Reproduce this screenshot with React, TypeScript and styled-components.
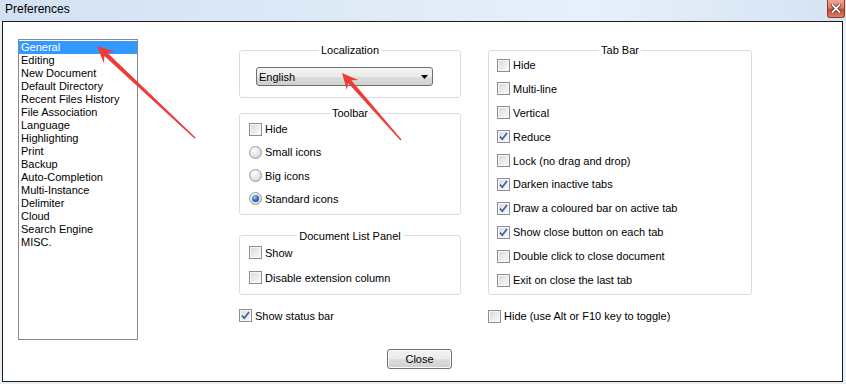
import styled, { createGlobalStyle } from 'styled-components';

const GlobalStyle = createGlobalStyle`
  html, body {
    margin: 0;
    padding: 0;
    background: #ffffff;
  }
  body {
    font-family: "Liberation Sans", Arial, sans-serif;
    font-size: 11px;
    color: #000000;
  }
`;

const Window = styled.div`
  position: relative;
  width: 846px;
  height: 384px;
  display: flex;
  flex-direction: column;
  background: #e6eef8;
  overflow: hidden;
`;

const TitleBar = styled.div`
  height: 21px;
  flex: none;
  display: flex;
  justify-content: space-between;
  align-items: flex-start;
  padding: 0 1px 0 5px;
  background: linear-gradient(to right, #d2e1f1 0%, #dde9f6 35%, #e7f0fa 70%, #d5e3f2 100%);
`;

const Title = styled.span`
  font-size: 12px;
  line-height: 19px;
`;

const CloseX = styled.div`
  width: 18px;
  height: 18px;
  box-sizing: border-box;
  border: 1px solid #8f3c2c;
  border-top: none;
  border-radius: 0 0 3px 3px;
  background: linear-gradient(#eba896 0%, #dc7a60 45%, #c9482e 55%, #dc8064 100%);
  display: flex;
  align-items: center;
  justify-content: center;
`;

const Body = styled.div`
  flex: 1;
  margin: 0 3px 2px 2px;
  border: 1px solid #1b1b1b;
  background: #ffffff;
  display: flex;
  flex-direction: column;
`;

const Main = styled.div`
  display: flex;
  align-items: flex-start;
  padding: 17px 0 0 15px;
`;

const PageList = styled.ul`
  list-style: none;
  margin: 0;
  padding: 1px 0 0;
  width: 120px;
  height: 301px;
  box-sizing: border-box;
  border: 1px solid #828790;
  flex: none;
`;

const PageItem = styled.li<{ $active?: boolean }>`
  height: 13px;
  line-height: 13px;
  padding-left: 2px;
  white-space: nowrap;
  background: ${p => (p.$active ? '#3399ff' : 'transparent')};
  color: ${p => (p.$active ? '#ffffff' : '#000000')};
`;

const Column = styled.div<{ $width: number; $offset: number }>`
  width: ${p => p.$width}px;
  margin-left: ${p => p.$offset}px;
  margin-top: 5px;
  display: flex;
  flex-direction: column;
  flex: none;
`;

const Group = styled.fieldset<{ $pad: string; $space?: number }>`
  margin: ${p => p.$space ?? 0}px 0 0;
  padding: ${p => p.$pad};
  width: 100%;
  box-sizing: border-box;
  min-inline-size: 0;
  border: 1px solid #d5dfe5;
  border-radius: 3px;
  display: flex;
  flex-direction: column;
  align-items: flex-start;
`;

const GroupTitle = styled.legend`
  margin: 0 auto;
  padding: 0 2px;
  font-size: 11px;
  line-height: 12px;
`;

const Options = styled.div<{ $gap: number }>`
  display: flex;
  flex-direction: column;
  gap: ${p => p.$gap}px;
`;

const Row = styled.label<{ $space?: number }>`
  display: flex;
  align-items: center;
  gap: 3px;
  height: 18px;
  white-space: nowrap;
  margin-top: ${p => p.$space ?? 0}px;
`;

const Box = styled.span`
  width: 13px;
  height: 13px;
  box-sizing: border-box;
  flex: none;
  border: 1px solid #8f8f8f;
  background: linear-gradient(135deg, #d6d8db 0%, #eeeeee 60%, #fafafa 100%);
  box-shadow: inset 0 0 0 1px #f6f6f6;
  display: flex;
  align-items: center;
  justify-content: center;
`;

const Round = styled.span`
  width: 13px;
  height: 13px;
  box-sizing: border-box;
  flex: none;
  border-radius: 50%;
  border: 1px solid #9a9a9a;
  background: radial-gradient(circle at 38% 32%, #ffffff 0%, #ebebeb 40%, #c6c6c6 100%);
  display: flex;
  align-items: center;
  justify-content: center;
`;

const Dot = styled.span`
  width: 7px;
  height: 7px;
  border-radius: 50%;
  background: radial-gradient(circle at 40% 35%, #9fd0f8 0%, #2d74c6 45%, #133c74 100%);
`;

const Select = styled.div`
  width: 177px;
  height: 19px;
  box-sizing: border-box;
  border: 1px solid #707070;
  border-radius: 3px;
  background: linear-gradient(#f3f3f3 0%, #ebebeb 50%, #dddddd 51%, #cfcfcf 100%);
  display: flex;
  align-items: center;
  justify-content: space-between;
  padding: 0 4px 0 2px;
`;

const Footer = styled.div`
  display: flex;
  justify-content: center;
  padding-right: 6px;
  margin-top: 9px;
`;

const Button = styled.button`
  width: 65px;
  height: 20px;
  box-sizing: border-box;
  border: 1px solid #707070;
  border-radius: 3px;
  background: linear-gradient(#f2f2f2 0%, #ebebeb 50%, #dddddd 51%, #cfcfcf 100%);
  box-shadow: inset 0 0 0 1px #fbfbfb;
  font-family: "Liberation Sans", Arial, sans-serif;
  font-size: 11px;
  color: #000;
  padding: 0;
`;

const Overlay = styled.svg`
  position: absolute;
  left: 0;
  top: 0;
  pointer-events: none;
`;

const pages = [
  'General', 'Editing', 'New Document', 'Default Directory', 'Recent Files History',
  'File Association', 'Language', 'Highlighting', 'Print', 'Backup', 'Auto-Completion',
  'Multi-Instance', 'Delimiter', 'Cloud', 'Search Engine', 'MISC.',
];

const tabOptions: [string, boolean][] = [
  ['Hide', false],
  ['Multi-line', false],
  ['Vertical', false],
  ['Reduce', true],
  ['Lock (no drag and drop)', false],
  ['Darken inactive tabs', true],
  ['Draw a coloured bar on active tab', true],
  ['Show close button on each tab', true],
  ['Double click to close document', false],
  ['Exit on close the last tab', false],
];

const Check = ({ label, checked, space }: { label: string; checked?: boolean; space?: number }) => (
  <Row $space={space}>
    <Box>
      {checked && (
        <svg width="11" height="11" viewBox="0 0 11 11">
          <path d="M2 5.6 L4.3 8.2 L9 2" fill="none" stroke="#3d5ea6" strokeWidth="1.7" />
        </svg>
      )}
    </Box>
    {label}
  </Row>
);

const Radio = ({ label, checked }: { label: string; checked?: boolean }) => (
  <Row>
    <Round>{checked && <Dot />}</Round>
    {label}
  </Row>
);

// tapered annotation arrow, tip -> tail
const arrow = (tx: number, ty: number, sx: number, sy: number, len = 17, half = 8) => {
  const d = Math.hypot(sx - tx, sy - ty);
  const ux = (sx - tx) / d;
  const uy = (sy - ty) / d;
  const nx = -uy;
  const ny = ux;
  const pt = (x: number, y: number) => `${x.toFixed(1)},${y.toFixed(1)}`;
  const bx = tx + ux * len;
  const by = ty + uy * len;
  const cx = tx + ux * len * 0.72;
  const cy = ty + uy * len * 0.72;
  return [
    pt(tx, ty),
    pt(bx + nx * half, by + ny * half),
    pt(cx + nx * 2.2, cy + ny * 2.2),
    pt(sx + nx * 0.7, sy + ny * 0.7),
    pt(sx - nx * 0.7, sy - ny * 0.7),
    pt(cx - nx * 2.2, cy - ny * 2.2),
    pt(bx - nx * half, by - ny * half),
  ].join(' ');
};

export default function App() {
  return (
    <Window>
      <GlobalStyle />
      <TitleBar>
        <Title>Preferences</Title>
        <CloseX>
          <svg width="10" height="9" viewBox="0 0 10 9">
            <path d="M1.5 1 L8.5 8 M8.5 1 L1.5 8" stroke="#5a2a20" strokeWidth="3.4" strokeLinecap="square" />
            <path d="M1.5 1 L8.5 8 M8.5 1 L1.5 8" stroke="#ffffff" strokeWidth="1.8" strokeLinecap="square" />
          </svg>
        </CloseX>
      </TitleBar>
      <Body>
        <Main>
          <PageList>
            {pages.map((p, i) => (
              <PageItem key={p} $active={i === 0}>{p}</PageItem>
            ))}
          </PageList>

          <Column $width={222} $offset={101}>
            <Group $pad="11px 16px 11px">
              <GroupTitle>Localization</GroupTitle>
              <Select>
                English
                <svg width="7" height="4" viewBox="0 0 7 4">
                  <polygon points="0,0 7,0 3.5,4" fill="#000" />
                </svg>
              </Select>
            </Group>
            <Group $pad="1px 9px 6px" $space={9}>
              <GroupTitle>Toolbar</GroupTitle>
              <Options $gap={5.33}>
                <Check label="Hide" />
                <Radio label="Small icons" />
                <Radio label="Big icons" />
                <Radio label="Standard icons" checked />
              </Options>
            </Group>
            <Group $pad="2px 9px 7px" $space={15}>
              <GroupTitle>Document List Panel</GroupTitle>
              <Options $gap={7}>
                <Check label="Show" />
                <Check label="Disable extension column" />
              </Options>
            </Group>
            <Check label="Show status bar" checked space={12} />
          </Column>

          <Column $width={264} $offset={27}>
            <Group $pad="0 8px 5px">
              <GroupTitle>Tab Bar</GroupTitle>
              <Options $gap={5.9}>
                {tabOptions.map(([label, on]) => (
                  <Check key={label} label={label} checked={on} />
                ))}
              </Options>
            </Group>
            <Check label="Hide (use Alt or F10 key to toggle)" space={12} />
          </Column>
        </Main>
        <Footer>
          <Button>Close</Button>
        </Footer>
      </Body>

      <Overlay width="846" height="384" viewBox="0 0 846 384">
        <polygon points={arrow(97, 46, 195, 138)} fill="#ee3b37" />
        <polygon points={arrow(342, 73, 401, 140, 16, 7.5)} fill="#ee3b37" />
      </Overlay>
    </Window>
  );
}
